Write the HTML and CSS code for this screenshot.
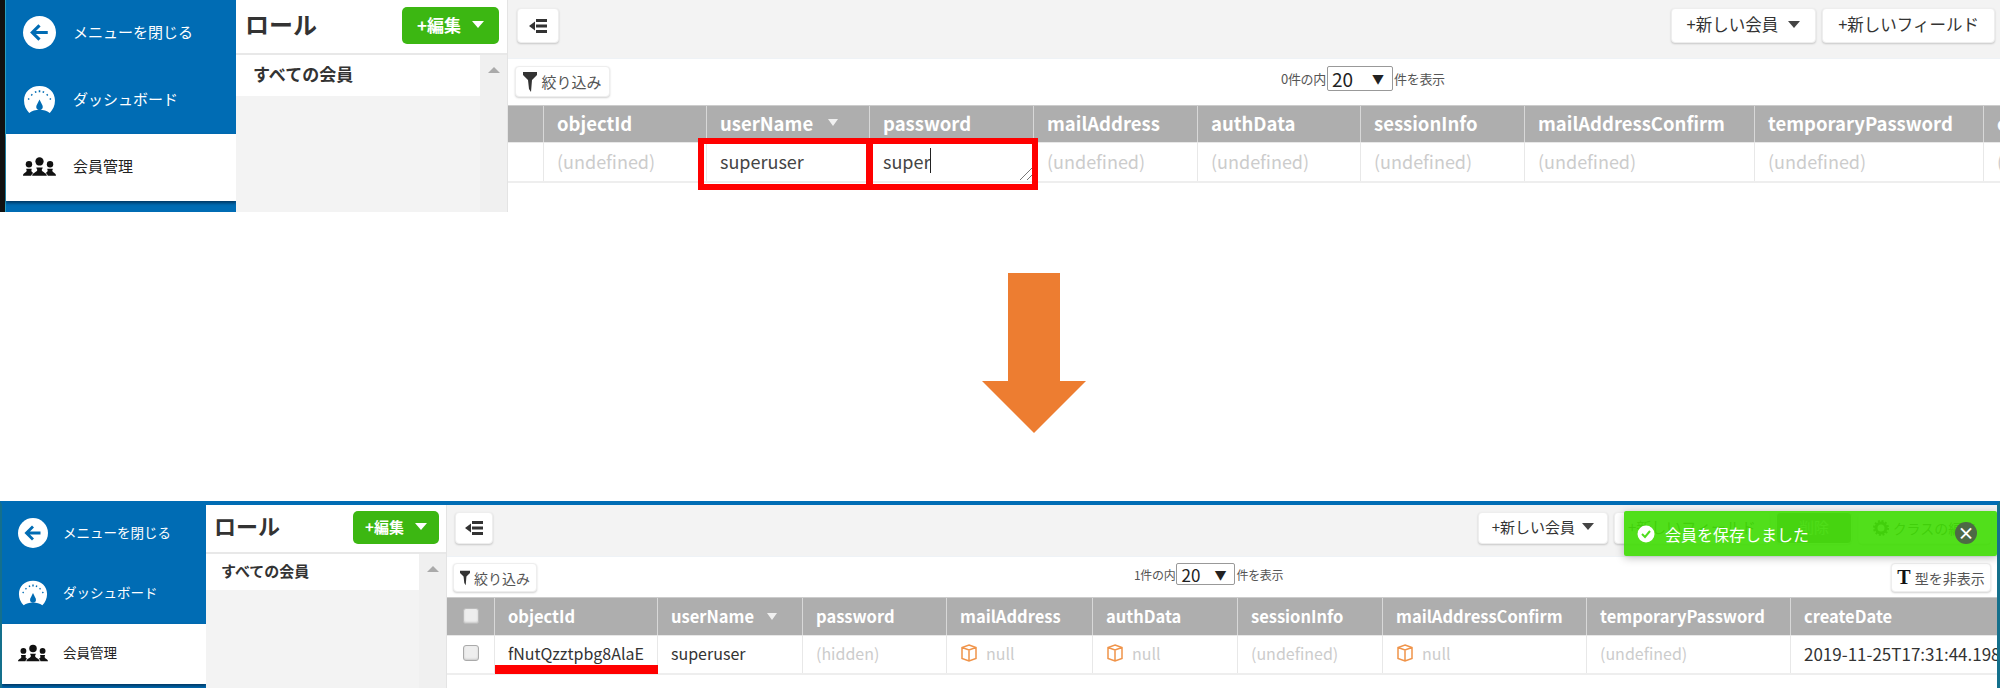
FILE: index.html
```html
<!DOCTYPE html>
<html lang="ja">

<head>
  <meta charset="UTF-8">
  <title>会員管理</title>
  <link rel="stylesheet" href="styles.css">
</head>

<body>
  <svg class="icon-defs" width="0" height="0">
    <symbol id="i-back" viewBox="0 0 32 32">
      <circle cx="16" cy="16" r="16" fill="#fff"/>
      <path d="M24 16H10M16 9l-7 7 7 7" fill="none" stroke="#006cb4" stroke-width="3"/>
    </symbol>
    <symbol id="i-gauge" viewBox="0 0 32 32">
      <path d="M16 3C7 3 1 9 1 17c0 5 2 9 5 12 3-2 6-3 10-3s7 1 10 3c3-3 5-7 5-12C31 9 25 3 16 3z" fill="#fff"/>
      <path d="M16 16l3 6a3.200 3.200 0 1 1-6 0z" fill="#006cb4"/>
      <path d="M5 16l1-1M8 11l1 1M12 8l.5 1.500M16 7v2M20 8l-.5 1.500M24 11l-1 1M27 16l-1-1" stroke="#006cb4" stroke-width="1.500" fill="none"/>
    </symbol>
    <symbol id="i-people" viewBox="0 0 36 20">
      <circle cx="18" cy="4.500" r="4.500"/>
      <path d="M10 20c0-3 5-4 5.500-6 .3-1-1-2-1-3h7c0 1-1.300 2-1 3 .5 2 5.500 3 5.500 6z"/>
      <circle cx="6.500" cy="7.500" r="3.500"/>
      <path d="M0 20c0-3 3.500-3 4-5 .2-.8-.5-1.500-.5-2.500h6c0 1-.5 1.700-.4 2.500.2 1 1.400 1.500 1.900 2-1 1-2 2-2 3z"/>
      <circle cx="29.500" cy="7.500" r="3.500"/>
      <path d="M36 20c0-3-3.500-3-4-5-.2-.8.5-1.500.5-2.500h-6c0 1 .5 1.700.4 2.500-.2 1-1.400 1.500-1.900 2 1 1 2 2 2 3z"/>
    </symbol>
    <symbol id="i-collapse" viewBox="0 0 18 14">
      <path d="M7 0h11v3H7zM7 5.500h11v3H7zM7 11h11v3H7z"/>
      <path d="M0 7l6-4.500v9z"/>
    </symbol>
    <symbol id="i-funnel" viewBox="0 0 14 20">
      <path d="M0 0h14v3L9 8l-1 12-2-3-1-9L0 3z"/>
    </symbol>
    <symbol id="i-box" viewBox="0 0 18 18">
      <path d="M9 1l7 2.500v11L9 17l-7-2.500v-11zM2 3.500L9 6l7-2.500M9 6v11" fill="none" stroke="#f0944a" stroke-width="1.500"/>
    </symbol>
    <symbol id="i-gear" viewBox="0 0 16 16">
      <circle cx="8" cy="8" r="5" fill="none" stroke="#333" stroke-width="3"/>
      <circle cx="8" cy="8" r="7" fill="none" stroke="#333" stroke-width="2" stroke-dasharray="2 1.700"/>
    </symbol>
  </svg>

  <section class="shot shot-before">
    <nav class="sidebar">
      <a class="nav-item"><svg class="nav-icon"><use href="#i-back"/></svg>メニューを閉じる</a>
      <a class="nav-item"><svg class="nav-icon"><use href="#i-gauge"/></svg>ダッシュボード</a>
      <a class="nav-item active"><svg class="nav-icon people"><use href="#i-people"/></svg>会員管理</a>
    </nav>
    <aside class="panel">
      <div class="panel-head">
        <h2>ロール</h2>
        <button class="edit-btn">+編集<span class="tri"></span></button>
      </div>
      <div class="panel-body">
        <ul class="role-list">
          <li>すべての会員</li>
        </ul>
        <div class="scrollbar"><span class="scroll-up"></span></div>
      </div>
    </aside>
    <main class="main">
      <div class="toolbar">
        <button class="btn collapse-btn"><svg><use href="#i-collapse"/></svg></button>
        <div class="toolbar-right">
          <button class="btn">+新しい会員<span class="tri dark"></span></button>
          <button class="btn">+新しいフィールド</button>
        </div>
      </div>
      <div class="controls">
        <button class="btn small-btn"><svg class="funnel"><use href="#i-funnel"/></svg>絞り込み</button>
        <div class="pager">0件の内<span class="page-select">20<span>▼</span></span>件を表示</div>
      </div>
      <div class="table">
        <div class="row head">
          <div class="cell"></div>
          <div class="cell">objectId</div>
          <div class="cell">userName<span class="sort"></span></div>
          <div class="cell">password</div>
          <div class="cell">mailAddress</div>
          <div class="cell">authData</div>
          <div class="cell">sessionInfo</div>
          <div class="cell">mailAddressConfirm</div>
          <div class="cell">temporaryPassword</div>
          <div class="cell">createDate</div>
        </div>
        <div class="row">
          <div class="cell"></div>
          <div class="cell muted">(undefined)</div>
          <div class="cell edit-cell">superuser<span class="red-box box-name"></span></div>
          <div class="cell edit-cell">super<span class="caret"></span><span class="grip"></span><span class="red-box box-pass"></span></div>
          <div class="cell muted">(undefined)</div>
          <div class="cell muted">(undefined)</div>
          <div class="cell muted">(undefined)</div>
          <div class="cell muted">(undefined)</div>
          <div class="cell muted">(undefined)</div>
          <div class="cell muted">(undefined)</div>
        </div>
      </div>
    </main>
  </section>

  <div class="arrow-wrap">
    <svg class="arrow" viewBox="0 0 104 160"><path d="M26 0h52v108h26l-52 52-52-52h26z" fill="#ed7d31"/></svg>
  </div>

  <section class="shot shot-after">
    <nav class="sidebar">
      <a class="nav-item"><svg class="nav-icon"><use href="#i-back"/></svg>メニューを閉じる</a>
      <a class="nav-item"><svg class="nav-icon"><use href="#i-gauge"/></svg>ダッシュボード</a>
      <a class="nav-item active"><svg class="nav-icon people"><use href="#i-people"/></svg>会員管理</a>
    </nav>
    <aside class="panel">
      <div class="panel-head">
        <h2>ロール</h2>
        <button class="edit-btn">+編集<span class="tri"></span></button>
      </div>
      <div class="panel-body">
        <ul class="role-list">
          <li>すべての会員</li>
        </ul>
        <div class="scrollbar"><span class="scroll-up"></span></div>
      </div>
    </aside>
    <main class="main">
      <div class="toolbar">
        <button class="btn collapse-btn"><svg><use href="#i-collapse"/></svg></button>
        <div class="toolbar-right">
          <button class="btn">+新しい会員<span class="tri dark"></span></button>
          <button class="btn field-btn">+新しいフィールド</button>
          <button class="btn delete-btn">削除</button>
          <button class="btn class-btn"><svg class="gear"><use href="#i-gear"/></svg>クラスの編集</button>
        </div>
      </div>
      <div class="controls">
        <button class="btn small-btn"><svg class="funnel"><use href="#i-funnel"/></svg>絞り込み</button>
        <div class="pager">1件の内<span class="page-select">20<span>▼</span></span>件を表示</div>
        <button class="btn small-btn type-btn"><span class="type-t">T</span>型を非表示</button>
      </div>
      <div class="table">
        <div class="row head">
          <div class="cell check-cell"><span class="check"></span></div>
          <div class="cell">objectId</div>
          <div class="cell">userName<span class="sort"></span></div>
          <div class="cell">password</div>
          <div class="cell">mailAddress</div>
          <div class="cell">authData</div>
          <div class="cell">sessionInfo</div>
          <div class="cell">mailAddressConfirm</div>
          <div class="cell">temporaryPassword</div>
          <div class="cell">createDate</div>
        </div>
        <div class="row">
          <div class="cell check-cell"><span class="check"></span></div>
          <div class="cell id-cell">fNutQzztpbg8AlaE<span class="red-line"></span></div>
          <div class="cell">superuser</div>
          <div class="cell muted">(hidden)</div>
          <div class="cell muted"><svg class="box"><use href="#i-box"/></svg>null</div>
          <div class="cell muted"><svg class="box"><use href="#i-box"/></svg>null</div>
          <div class="cell muted">(undefined)</div>
          <div class="cell muted"><svg class="box"><use href="#i-box"/></svg>null</div>
          <div class="cell muted">(undefined)</div>
          <div class="cell date-cell">2019-11-25T17:31:44.198Z</div>
        </div>
      </div>
    </main>

    <div class="toast">
      <svg class="toast-check" viewBox="0 0 18 18">
        <circle cx="9" cy="9" r="8.500" fill="#fff"/>
        <path d="M5 9l3 3 5-6" fill="none" stroke="#4fdd1e" stroke-width="2"/>
      </svg>
      会員を保存しました
      <span class="toast-close">×</span>
    </div>
  </section>
</body>

</html>
```

FILE: styles.css
```css
* {
  box-sizing: border-box;
}

body {
  margin: 0;
  width: 2000px;
  height: 688px;
  overflow: hidden;
  background-color: #fff;
  font-family: "Noto Sans CJK JP", "Open Sans", sans-serif;
  color: #333;
}

h2,
ul {
  margin: 0;
  padding: 0;
}

button {
  font-family: inherit;
  color: inherit;
  cursor: pointer;
}

.icon-defs {
  position: absolute;
}

/* one screenshot of the member page */
.shot {
  position: relative;
  display: flex;
  overflow: hidden;
}

.shot-before {
  height: 212px;
  border-left: 5px solid #111;
}

.shot-after {
  height: 187px;
  border-top: 4px solid #006cb4;
  border-left: 2px solid #14708c;
  border-right: 3px solid #14708c;
}

.arrow-wrap {
  height: 289px;
  padding: 61px 0 0 68px;
  display: flex;
  justify-content: center;
}

.arrow {
  width: 104px;
  height: 160px;
}

/* sidebar */
.sidebar {
  flex: none;
  display: flex;
  flex-direction: column;
  background-color: #006cb4;
  color: #fff;
}

.shot-before .sidebar {
  width: 231px;
  border-left: 1px solid #2a9fc0;
  font-size: 15px;
}

.shot-after .sidebar {
  width: 204px;
  font-size: 13.5px;
}

.nav-item {
  display: flex;
  align-items: center;
  flex: none;
}

.shot-before .nav-item {
  height: 67px;
  gap: 17px;
  padding: 0 0 4px 17px;
}

.shot-after .nav-item {
  height: 60px;
  gap: 15px;
  padding: 0 0 5px 16px;
}

.shot-after .nav-item:first-child {
  height: 59px;
}

.nav-item.active {
  background-color: #fff;
  color: #222;
  box-shadow: 0 2px 3px rgba(0, 30, 60, 0.7);
}

.nav-icon {
  flex: none;
  fill: #111;
}

.shot-before .nav-icon {
  width: 33px;
  height: 33px;
  margin-top: 2px;
}

.shot-after .nav-icon {
  width: 30px;
  height: 30px;
  margin-top: 2px;
}

/* roles panel */
.panel {
  flex: none;
  display: flex;
  flex-direction: column;
  background-color: #f3f3f3;
  border-right: 1px solid #e4e4e4;
}

.shot-before .panel {
  width: 272px;
}

.shot-after .panel {
  width: 241px;
}

.panel-head {
  display: flex;
  justify-content: space-between;
  align-items: center;
  background-color: #fff;
  border-bottom: 2px solid #e8e8e8;
  flex: none;
}

.shot-before .panel-head {
  height: 55px;
  padding: 0 8px 2px 9px;
}

.shot-after .panel-head {
  height: 49px;
  padding: 0 7px 2px 8px;
}

.shot-before h2 {
  font-size: 24px;
  margin-bottom: 5px;
}

.shot-after h2 {
  font-size: 22px;
  margin-bottom: 6px;
}

.edit-btn {
  display: flex;
  align-items: center;
  justify-content: center;
  gap: 11px;
  border: none;
  border-radius: 5px;
  background-color: #3cb712;
  color: #fff;
  font-weight: bold;
}

.shot-before .edit-btn {
  width: 97px;
  height: 37px;
  font-size: 17px;
  padding: 0 0 3px;
}

.shot-after .edit-btn {
  width: 86px;
  height: 33px;
  font-size: 15px;
  padding: 0 0 3px;
}

.tri {
  display: inline-block;
  border-left: 6px solid transparent;
  border-right: 6px solid transparent;
  border-top: 7px solid #fff;
}

.tri.dark {
  border-top-color: #444;
  margin-left: 7px;
}

.shot-before .tri.dark {
  margin-left: 10px;
}

.panel-body {
  flex: 1;
  display: flex;
}

.role-list {
  flex: 1;
  list-style: none;
}

.role-list li {
  background-color: #fff;
  font-weight: bold;
}

.shot-before .role-list li {
  height: 41px;
  line-height: 38px;
  padding-left: 17px;
  font-size: 17px;
}

.shot-after .role-list li {
  height: 36px;
  line-height: 33px;
  padding-left: 15px;
  font-size: 15px;
}

.scrollbar {
  flex: none;
  width: 27px;
  padding-top: 12px;
  display: flex;
  justify-content: center;
  background-color: #f0f0f0;
}

.scroll-up {
  border-left: 6px solid transparent;
  border-right: 6px solid transparent;
  border-bottom: 6px solid #aaa;
  height: 0;
}

/* main column */
.main {
  flex: 1;
  min-width: 0;
  background-color: #fff;
}

.toolbar {
  display: flex;
  justify-content: space-between;
  background-color: #f3f3f3;
  border-bottom: 1px solid #eef2f6;
}

.shot-before .toolbar {
  height: 59px;
  padding: 8px 5px 0 9px;
}

.shot-after .toolbar {
  height: 52px;
  padding: 7px 6px 0 8px;
}

.toolbar-right {
  display: flex;
  gap: 6px;
}

.btn {
  display: flex;
  align-items: center;
  justify-content: center;
  white-space: nowrap;
  background-color: #fff;
  border: 1px solid #eee;
  border-radius: 4px;
  box-shadow: 0 1px 2px rgba(0, 0, 0, 0.18);
}

.shot-before .toolbar .btn {
  height: 35px;
  padding: 0 15px 3px;
  font-size: 16.5px;
}

.shot-after .toolbar .btn {
  height: 32px;
  padding: 0 13px 3px;
  font-size: 15px;
}

.shot-before .toolbar .collapse-btn {
  width: 42px;
  padding: 0;
}

.shot-after .toolbar .collapse-btn {
  width: 38px;
  padding: 0;
}

.collapse-btn svg {
  width: 18px;
  height: 14px;
  fill: #333;
}

.shot-after .toolbar .field-btn {
  width: 156px;
}

.shot-after .toolbar .delete-btn {
  width: 76px;
  background-color: #777;
  color: #ddd;
}

.shot-after .toolbar .class-btn {
  width: 133px;
  gap: 4px;
  padding: 0;
  font-size: 14px;
}

.gear {
  width: 16px;
  height: 16px;
  flex: none;
}

.controls {
  display: flex;
  align-items: flex-start;
}

.shot-before .controls {
  height: 46px;
  padding: 7px 0 0 7px;
}

.shot-after .controls {
  height: 40px;
  padding: 6px 6px 0 6px;
}

.small-btn {
  gap: 4px;
  flex: none;
  color: #555;
}

.shot-before .small-btn {
  width: 95px;
  height: 31px;
  font-size: 15px;
}

.shot-after .small-btn {
  width: 84px;
  height: 29px;
  font-size: 14px;
}

.funnel {
  width: 14px;
  height: 20px;
  fill: #333;
}

.pager {
  display: flex;
  align-items: center;
  color: #555;
  letter-spacing: -0.3px;
}

.shot-before .pager {
  margin-left: 671px;
  font-size: 13px;
}

.shot-after .pager {
  margin-left: 597px;
  font-size: 12px;
}

.page-select {
  display: flex;
  justify-content: space-between;
  align-items: center;
  background-color: #fff;
  border: 1px solid #999;
  border-radius: 2px;
  color: #222;
  padding: 0 8px 0 4px;
  margin: 0 1px;
  letter-spacing: 0;
}

.page-select span {
  font-size: 12px;
}

.shot-before .page-select {
  width: 66px;
  height: 25px;
  font-size: 19px;
}

.shot-after .page-select {
  width: 59px;
  height: 22px;
  font-size: 17px;
}

.type-btn {
  margin-left: auto;
}

.shot-after .type-btn {
  width: 100px;
  font-size: 14px;
}

.type-t {
  font-family: "Liberation Serif", serif;
  font-size: 20px;
  font-weight: bold;
  color: #111;
}

/* table */
.table {
  overflow: hidden;
  height: 100px;
}

.row {
  display: grid;
  border-bottom: 2px solid #eee;
}

.shot-before .row {
  grid-template-columns: 36px 163px 163px 164px 164px 163px 164px 230px 229px 200px;
  height: 40px;
  font-size: 18px;
}

.shot-after .row {
  grid-template-columns: 48px 163px 145px 144px 146px 145px 145px 204px 204px 300px;
  height: 39px;
  font-size: 16px;
}

.row.head {
  background-color: #aeaeae;
  color: #fff;
  font-weight: bold;
  border-bottom: 1px solid #e8e8e8;
  border-top: 1px solid #ccc;
}

.shot-before .row.head {
  height: 38px;
  margin-left: -2px;
  grid-template-columns: 38px 163px 163px 164px 164px 163px 164px 230px 229px 200px;
  font-size: 18.5px;
}

.shot-after .row.head {
  height: 39px;
  font-size: 16.5px;
}

.cell {
  position: relative;
  display: flex;
  align-items: center;
  white-space: nowrap;
  border-right: 1px solid #e8e8e8;
  padding: 0 0 3px 13px;
}

.row.head .cell {
  border-right-color: #d8d8d8;
}

.shot-after .row.head .cell {
  padding-bottom: 1px;
}

.muted {
  color: #ccc;
}

.date-cell {
  font-size: 17px;
}

.sort {
  display: inline-block;
  margin-left: 15px;
  border-left: 5px solid transparent;
  border-right: 5px solid transparent;
  border-top: 7px solid #f0f0f0;
}

.shot-after .sort {
  margin-left: 13px;
}

.edit-cell {
  color: #444;
}

.caret {
  width: 1px;
  height: 25px;
  background-color: #222;
}

.grip {
  position: absolute;
  right: 0;
  bottom: 1px;
  width: 14px;
  height: 14px;
  background: linear-gradient(135deg, transparent 50%, #777 50%, #777 56%, transparent 56%, transparent 76%, #777 76%, #777 82%, transparent 82%);
}

/* red marks laid over the cells */
.red-box {
  position: absolute;
  top: -5px;
  bottom: -9px;
  border: 6px solid #f00;
}

.box-name {
  left: -9px;
  right: -3px;
}

.box-pass {
  left: -3px;
  right: -5px;
}

.check-cell {
  justify-content: center;
}

.shot-after .check-cell {
  padding-left: 0;
}

.check {
  width: 16px;
  height: 16px;
  background-color: #eee;
  border: 1px solid #aaa;
  border-radius: 3px;
  box-shadow: inset 0 -1px 2px rgba(0, 0, 0, 0.15);
}

.row.head .check {
  border-color: #bbb;
}

.red-line {
  position: absolute;
  left: 0;
  right: -1px;
  bottom: -1px;
  height: 9px;
  background-color: #f00;
}

.box {
  width: 18px;
  height: 18px;
  margin-right: 8px;
}

/* saved message */
.toast {
  position: absolute;
  top: 6px;
  left: 1622px;
  width: 373px;
  height: 45px;
  display: flex;
  align-items: center;
  padding-left: 13px;
  gap: 10px;
  background-color: rgba(66, 220, 8, 0.92);
  border-radius: 2px;
  color: #fff;
  font-size: 16px;
  box-shadow: 0 2px 8px rgba(0, 0, 0, 0.25);
}

.toast-check {
  width: 18px;
  height: 18px;
}

.toast-close {
  position: absolute;
  top: 11px;
  right: 20px;
  width: 22px;
  height: 22px;
  border-radius: 50%;
  background-color: #4d6a45;
  text-align: center;
  line-height: 21px;
  font-weight: bold;
  font-size: 17px;
}
```
